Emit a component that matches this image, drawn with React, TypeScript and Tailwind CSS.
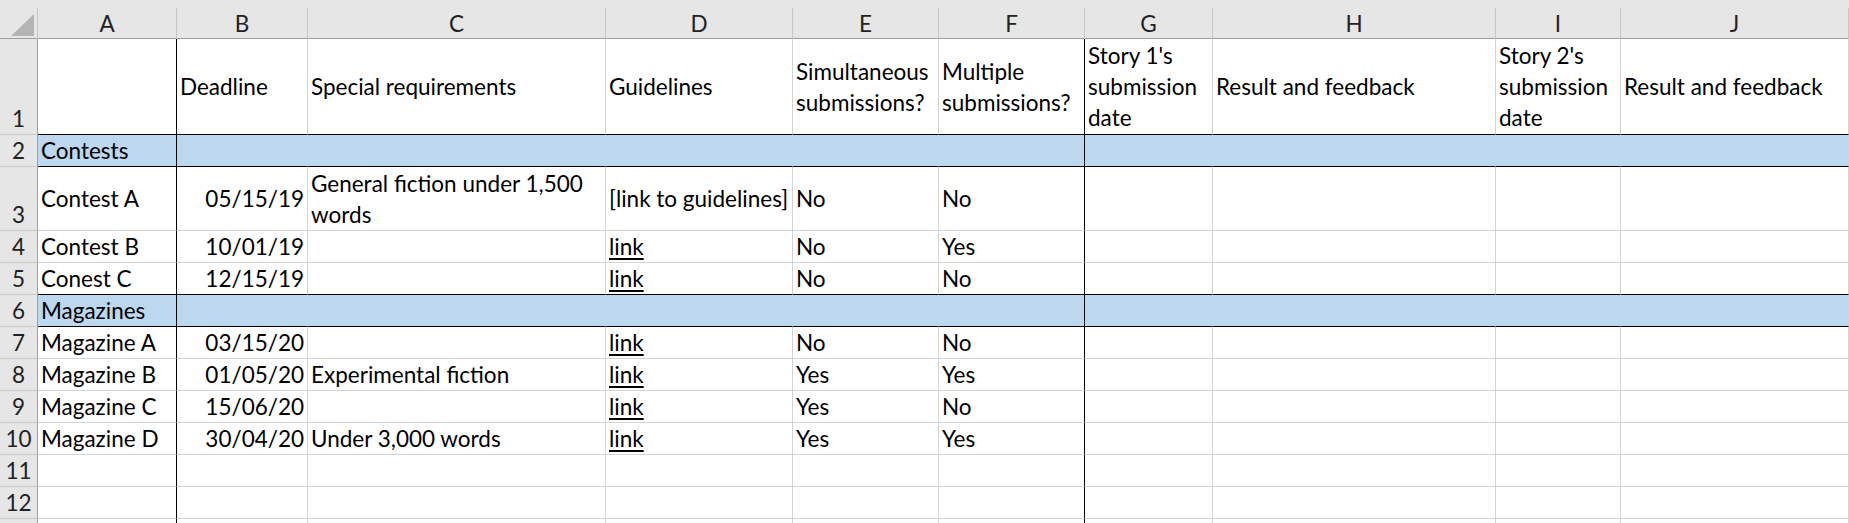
import React from 'react';

const GRID = 'grid grid-cols-[38px_139px_131px_298px_187px_146px_146px_128px_283px_125px_228px]';
const FONT = "font-['Lato','Liberation_Sans',sans-serif] text-[22.5px] leading-[31px] text-black";

const letters = ['A', 'B', 'C', 'D', 'E', 'F', 'G', 'H', 'I', 'J'];

type Cell = string | { link: string } | null;

interface RowData {
    num: number | null;
    height: string;
    cells: Cell[];
    section?: boolean;
    blackBottom?: boolean;
}

const L = { link: 'link' };

const rows: RowData[] = [
    {
        num: 1,
        height: 'h-[96px]',
        blackBottom: true,
        cells: [
            null,
            'Deadline',
            'Special requirements',
            'Guidelines',
            'Simultaneous submissions?',
            'Multiple submissions?',
            "Story 1's submission date",
            'Result and feedback',
            "Story 2's submission date",
            'Result and feedback',
        ],
    },
    { num: 2, height: 'h-[32px]', section: true, blackBottom: true, cells: ['Contests'] },
    {
        num: 3,
        height: 'h-[64px]',
        cells: ['Contest A', '05/15/19', 'General fiction under 1,500 words', '[link to guidelines]', 'No', 'No'],
    },
    { num: 4, height: 'h-[32px]', cells: ['Contest B', '10/01/19', null, L, 'No', 'Yes'] },
    { num: 5, height: 'h-[32px]', blackBottom: true, cells: ['Conest C', '12/15/19', null, L, 'No', 'No'] },
    { num: 6, height: 'h-[32px]', section: true, blackBottom: true, cells: ['Magazines'] },
    { num: 7, height: 'h-[32px]', cells: ['Magazine A', '03/15/20', null, L, 'No', 'No'] },
    { num: 8, height: 'h-[32px]', cells: ['Magazine B', '01/05/20', 'Experimental fiction', L, 'Yes', 'Yes'] },
    { num: 9, height: 'h-[32px]', cells: ['Magazine C', '15/06/20', null, L, 'Yes', 'No'] },
    { num: 10, height: 'h-[32px]', cells: ['Magazine D', '30/04/20', 'Under 3,000 words', L, 'Yes', 'Yes'] },
    { num: 11, height: 'h-[32px]', cells: [] },
    { num: 12, height: 'h-[32px]', cells: [] },
];

const SheetRow: React.FC<{ row: RowData }> = ({ row }) => (
    <div className={`${GRID} ${row.height}`}>
        {/* row number */}
        <div className="flex items-end justify-center bg-[#e6e6e6] border-r border-r-[#9e9e9e] border-b border-b-[#c8c8c8] text-[#222]">
            {row.num}
        </div>
        {letters.map((_, i) => {
            const value = row.cells[i] ?? null;
            const rightEdge =
                i === 0 || i === 5
                    ? 'border-r-black'
                    : row.section
                      ? 'border-r-[#bdd7ee]'
                      : 'border-r-[#d4d4d4]';
            const bottomEdge = row.blackBottom ? 'border-b-black' : 'border-b-[#d4d4d4]';
            const isDate = i === 1 && row.num !== 1;
            const wraps = row.num === 1 || (row.num === 3 && i === 2);
            return (
                <div
                    key={i}
                    className={`flex items-center px-[3px] border-r border-b ${rightEdge} ${bottomEdge} ${
                        row.section ? 'bg-[#bdd7ee]' : 'bg-white'
                    } ${isDate ? 'justify-end' : 'justify-start'} ${wraps ? '' : 'whitespace-nowrap'}`}
                >
                    {typeof value === 'string' && <span>{value}</span>}
                    {value && typeof value === 'object' && (
                        <span className="underline decoration-2 underline-offset-[3px]">{value.link}</span>
                    )}
                </div>
            );
        })}
    </div>
);

export default function App() {
    return (
        <div className={`w-[1849px] h-[523px] overflow-hidden bg-white ${FONT}`}>
            {/* top strip */}
            <div className="h-[8px] bg-[#e6e6e6]" />

            {/* column letters */}
            <div className={`${GRID} h-[31px] bg-[#e6e6e6] text-[#222] border-b border-b-[#9e9e9e]`}>
                <div className="flex items-end justify-end pr-[3px] pb-[3px] border-r border-r-[#c6c6c6]">
                    <svg width="23" height="22" viewBox="0 0 23 22">
                        <polygon points="0,22 23,22 23,0" fill="#b4b4b4" />
                    </svg>
                </div>
                {letters.map((l) => (
                    <div key={l} className="flex items-center justify-center border-r border-r-[#c6c6c6]">
                        {l}
                    </div>
                ))}
            </div>

            {rows.map((r) => (
                <SheetRow key={r.num} row={r} />
            ))}

            {/* partial row 13 */}
            <div className={`${GRID} h-[4px]`}>
                <div className="bg-[#e6e6e6] border-r border-r-[#9e9e9e]" />
                {letters.map((l, i) => (
                    <div
                        key={l}
                        className={`border-r ${i === 0 || i === 5 ? 'border-r-black' : 'border-r-[#d4d4d4]'}`}
                    />
                ))}
            </div>
        </div>
    );
}
